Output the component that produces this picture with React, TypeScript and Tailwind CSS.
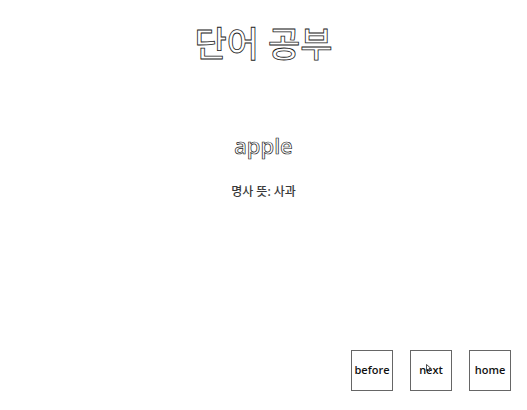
import React from 'react';

const BUTTONS = ['before', 'next', 'home'];

export default function App() {
  return (
    <div className="flex h-[410px] w-[527px] flex-col bg-white font-['Noto_Sans','Noto_Sans_CJK_KR',sans-serif]">
      <h1 className="mt-[19px] text-center text-[35px] font-medium leading-[50px] text-white [-webkit-text-stroke:0.8px_#222]">
        단어 공부
      </h1>
      <div className="mt-[60px] text-center text-[22px] font-medium leading-[32px] text-white [-webkit-text-stroke:0.7px_#222]">
        apple
      </div>
      <p className="mt-[22px] text-center text-[12px] font-medium leading-[18px] text-[#3a3a3a]">
        명사 뜻: 사과
      </p>

      <div className="mt-auto mb-[19px] mr-[16px] flex justify-end gap-[17px]">
        {BUTTONS.map((label) => (
          <button
            key={label}
            className="relative flex h-[41px] w-[42px] items-center justify-center border border-[#666] bg-white font-['Open_Sans',sans-serif] text-[11px] font-semibold text-[#111]"
          >
            {label}
            {label === 'next' && (
              <svg
                className="absolute left-[15px] top-[13px]"
                width="6"
                height="8"
                viewBox="0 0 6 8"
              >
                <path d="M0.5 0.5 L0.5 6.5 L2 5 L3.2 7.5 L4 7 L3 4.6 L5.2 4.6 Z" fill="white" stroke="#222" strokeWidth="0.8" />
              </svg>
            )}
          </button>
        ))}
      </div>
    </div>
  );
}
